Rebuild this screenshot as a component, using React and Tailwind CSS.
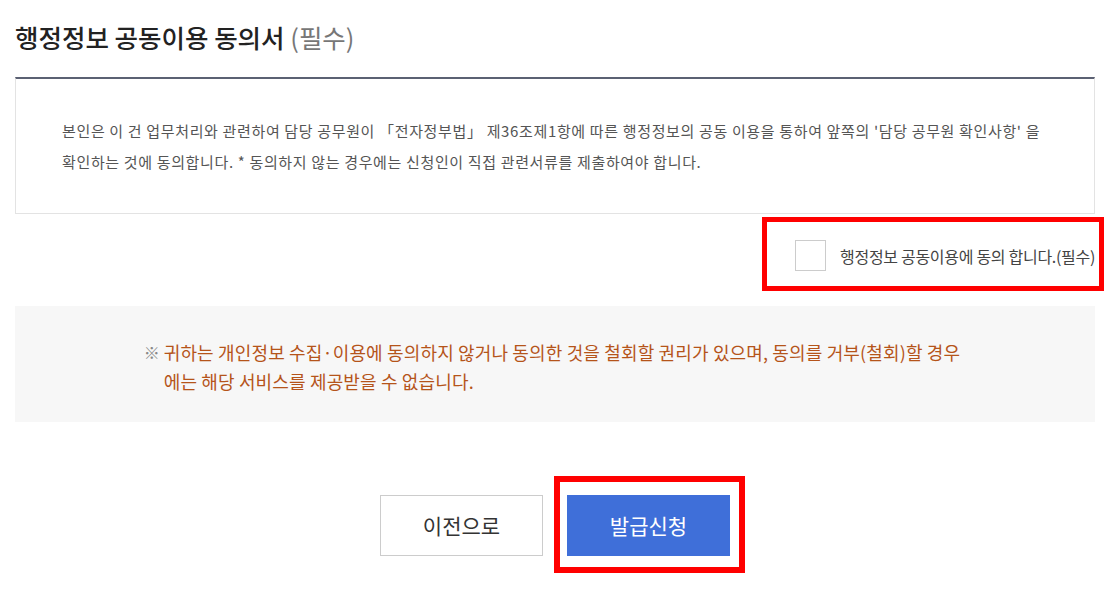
import React, { useState } from 'react';

const font = { fontFamily: '"Noto Sans CJK KR", "Noto Sans", sans-serif' };

const App = () => {
  const [agreed, setAgreed] = useState(false);

  return (
    <div className="w-[1110px] min-h-[605px] bg-white px-[15px] text-[#333]" style={font}>
      {/* title */}
      <h2 className="pt-[21px] pb-[24px] text-[25.5px] leading-[32px] font-medium text-[#222] tracking-[0px]">
        행정정보 공동이용 동의서 <span className="font-normal text-[#777]">(필수)</span>
      </h2>

      {/* agreement text */}
      <div className="border-t-2 border-t-[#5b6173] border-x border-b border-[#e3e3e3] px-[46px] pt-[36px] pb-[36px]">
        <p className="text-[15px] leading-[31px] text-[#555] tracking-[0.65px] whitespace-nowrap">
          본인은 이 건 업무처리와 관련하여 담당 공무원이 「전자정부법」 제36조제1항에 따른 행정정보의 공동 이용을 통하여 앞쪽의 '담당 공무원 확인사항' 을
          <br />
          확인하는 것에 동의합니다. * 동의하지 않는 경우에는 신청인이 직접 관련서류를 제출하여야 합니다.
        </p>
      </div>

      {/* checkbox row */}
      <div className="flex justify-end mt-[26px] mb-[35px]">
        <label className="relative flex items-center gap-[14px] cursor-pointer">
          <span
            onClick={() => setAgreed(a => !a)}
            className={`w-[31px] h-[31px] border border-[#cccccc] bg-white flex items-center justify-center ${agreed ? 'text-[#3f6fd9]' : ''}`}
          >
            {agreed && (
              <svg width="18" height="18" viewBox="0 0 24 24" fill="none" stroke="currentColor" strokeWidth="3">
                <path d="M4 12l5 5L20 6" />
              </svg>
            )}
          </span>
          <span className="text-[16px] leading-[30px] text-[#444] tracking-[-0.3px] whitespace-nowrap">행정정보 공동이용에 동의 합니다.(필수)</span>
          <span className="absolute -left-[33px] -right-[9px] -top-[23px] -bottom-[20px] border-[5px] border-[#ff0000] pointer-events-none" />
        </label>
      </div>

      {/* notice */}
      <div className="bg-[#f7f7f7] pt-[32px] pb-[26px] flex justify-center">
        <div className="flex text-[18px] leading-[29px] tracking-[0.15px] -ml-[6px]">
          <span className="w-[20px] shrink-0 text-[#888] text-[16px]">※</span>
          <p className="text-[#b5541a] whitespace-nowrap">
            귀하는 개인정보 수집·이용에 동의하지 않거나 동의한 것을 철회할 권리가 있으며, 동의를 거부(철회)할 경우
            <br />
            에는 해당 서비스를 제공받을 수 없습니다.
          </p>
        </div>
      </div>

      {/* buttons */}
      <div className="flex justify-center gap-[24px] pt-[73px]">
        <button className="w-[163px] h-[61px] border border-[#cccccc] bg-white text-[21px] text-[#333]">이전으로</button>
        <div className="relative">
          <button className="w-[163px] h-[61px] bg-[#3f6fd9] text-[21px] text-white">발급신청</button>
          <span className="absolute -left-[13px] -right-[15px] -top-[19px] -bottom-[17px] border-[6px] border-[#ff0000] pointer-events-none" />
        </div>
      </div>
    </div>
  );
};

export default App;
